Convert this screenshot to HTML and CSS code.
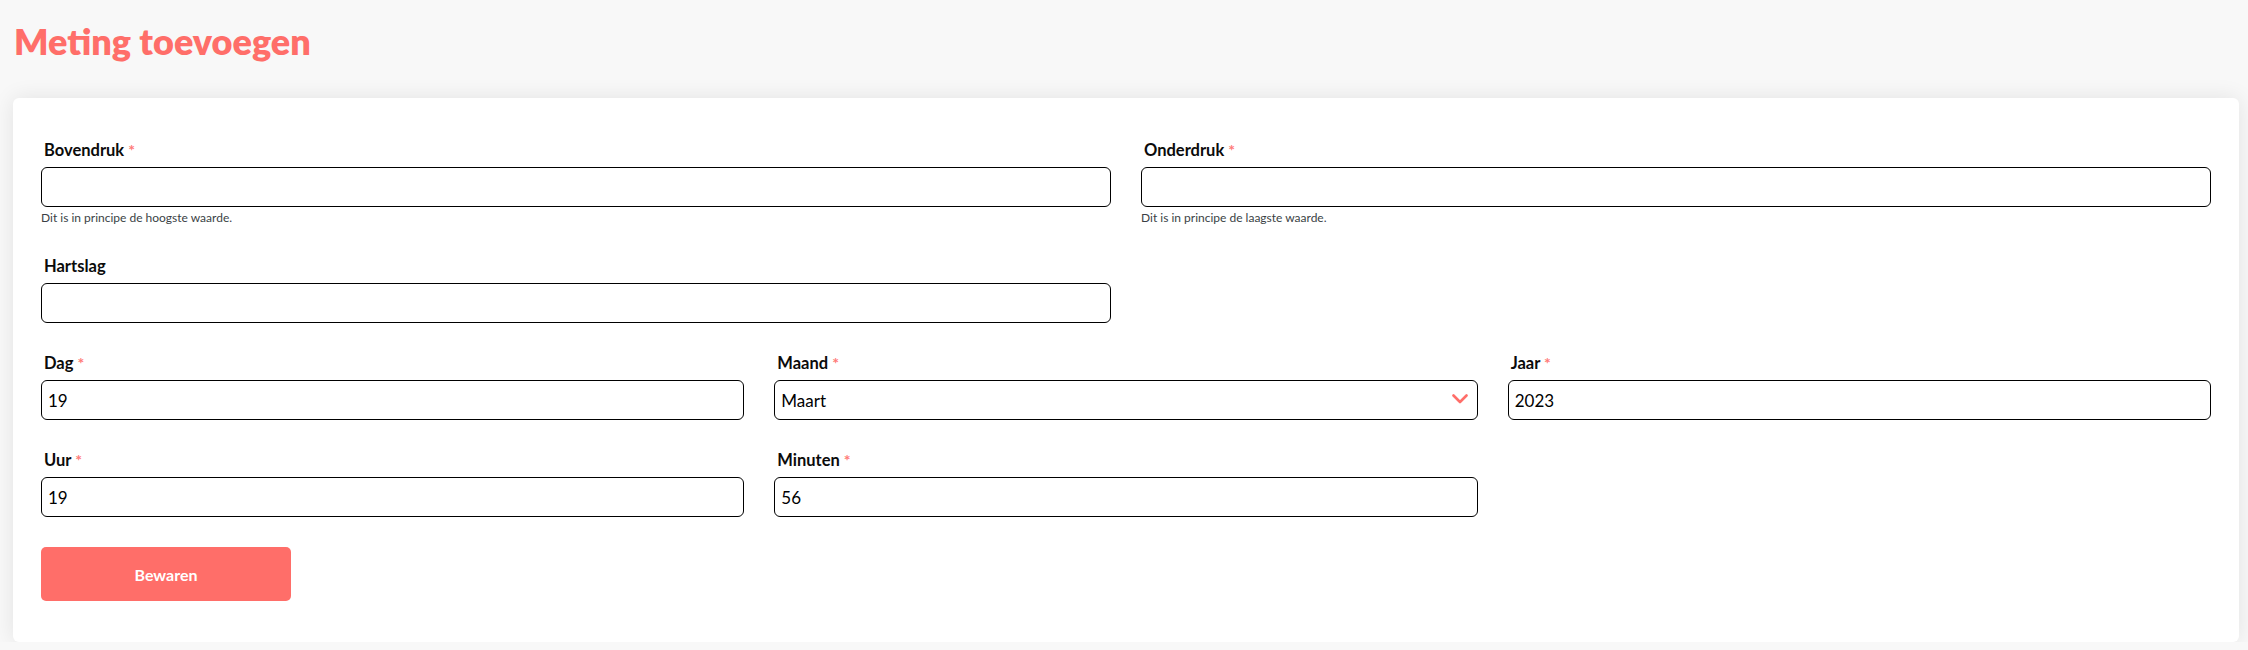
FILE: index.html
```html
<!DOCTYPE html>
<html lang="nl">
<head>
<meta charset="utf-8">
<title>Meting toevoegen</title>
<link rel="stylesheet" href="styles.css">
</head>
<body>
<h1 class="title">Meting toevoegen</h1>
<div class="card">
  <form class="form">
    <div class="row row-2">
      <div class="field">
        <label class="label">Bovendruk <span class="req">*</span></label>
        <input class="input" type="text" value="">
        <div class="help">Dit is in principe de hoogste waarde.</div>
      </div>
      <div class="field">
        <label class="label">Onderdruk <span class="req">*</span></label>
        <input class="input" type="text" value="">
        <div class="help">Dit is in principe de laagste waarde.</div>
      </div>
    </div>
    <div class="row row-2">
      <div class="field">
        <label class="label">Hartslag</label>
        <input class="input" type="text" value="">
      </div>
    </div>
    <div class="row row-3">
      <div class="field">
        <label class="label">Dag <span class="req">*</span></label>
        <input class="input" type="text" value="19">
      </div>
      <div class="field">
        <label class="label">Maand <span class="req">*</span></label>
        <div class="select-wrap">
          <select class="input select">
            <option>Maart</option>
          </select>
          <svg class="chevron" width="16" height="10" viewBox="0 0 16 10"><path d="M1.5 1.5 L8 8 L14.5 1.5" fill="none" stroke="#ff6e69" stroke-width="2.6" stroke-linecap="round" stroke-linejoin="round"/></svg>
        </div>
      </div>
      <div class="field">
        <label class="label">Jaar <span class="req">*</span></label>
        <input class="input" type="text" value="2023">
      </div>
    </div>
    <div class="row row-3">
      <div class="field">
        <label class="label">Uur <span class="req">*</span></label>
        <input class="input" type="text" value="19">
      </div>
      <div class="field">
        <label class="label">Minuten <span class="req">*</span></label>
        <input class="input" type="text" value="56">
      </div>
    </div>
    <button class="btn" type="button">Bewaren</button>
  </form>
</div>
</body>
</html>
```
FILE: styles.css
```css
* { box-sizing: border-box; }
html, body { margin: 0; }
body {
  background: #f8f8f8;
  font-family: Lato, "Noto Sans", sans-serif;
  padding: 0 9px 0 13px;
  color: #000;
}
.title {
  margin: 19px 0 35px 1px;
  font-size: 36px;
  line-height: 44px;
  height: 44px;
  font-weight: 800;
  color: #ff6e69;
}
.card {
  background: #fff;
  border-radius: 6px;
  box-shadow: 0 0 22px rgba(0, 0, 0, 0.09);
  padding: 42px 28px 41px;
}
.form { display: flex; flex-direction: column; }
.row {
  display: grid;
  column-gap: 30px;
  margin-bottom: 30px;
}
.row-2 { grid-template-columns: 1fr 1fr; }
.row-3 { grid-template-columns: 1fr 1fr 1fr; }
.field { display: flex; flex-direction: column; }
.label {
  font-size: 16.5px;
  line-height: 20px;
  height: 20px;
  font-weight: 700;
  padding-left: 3px;
  margin-bottom: 7px;
  color: #0b0b0b;
}
.req {
  color: #ff7b78;
  font-weight: 700;
  font-size: 16px;
  line-height: 20px;
}
.input {
  height: 40px;
  width: 100%;
  border: 1px solid #000;
  border-radius: 6px;
  padding: 0 6px;
  font-family: Lato, "Noto Sans", sans-serif;
  font-size: 17px;
  color: #000;
  background: #fff;
  outline: none;
  margin: 0;
}
.select-wrap { position: relative; height: 40px; }
.select {
  appearance: none;
  -webkit-appearance: none;
  display: block;
}
.chevron {
  position: absolute;
  right: 10px;
  top: 14px;
}
.help {
  margin-top: 3px;
  font-size: 12px;
  line-height: 16px;
  height: 16px;
  color: #3a3f45;
}
.btn {
  align-self: flex-start;
  width: 250px;
  height: 54px;
  border: none;
  border-radius: 5px;
  background: #ff6e69;
  color: #fff;
  font-family: Lato, "Noto Sans", sans-serif;
  font-size: 16px;
  font-weight: 700;
  cursor: pointer;
  margin: 0;
  padding: 0;
}
```
